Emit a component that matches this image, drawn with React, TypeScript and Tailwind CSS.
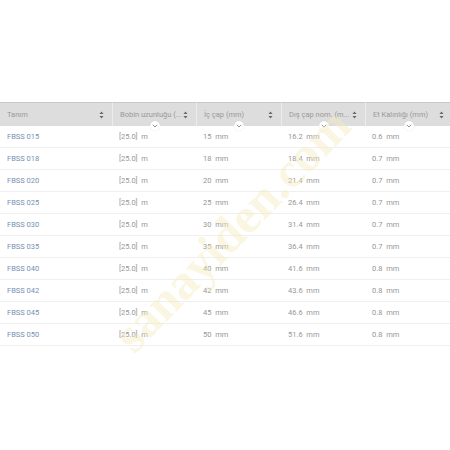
import React from "react";

const rows = [
  ["FBSS 015", "15", "16.2", "0.6"],
  ["FBSS 018", "18", "18.4", "0.7"],
  ["FBSS 020", "20", "21.4", "0.7"],
  ["FBSS 025", "25", "26.4", "0.7"],
  ["FBSS 030", "30", "31.4", "0.7"],
  ["FBSS 035", "35", "36.4", "0.7"],
  ["FBSS 040", "40", "41.6", "0.8"],
  ["FBSS 042", "42", "43.6", "0.8"],
  ["FBSS 045", "45", "46.6", "0.8"],
  ["FBSS 050", "50", "51.6", "0.8"],
];

const headers = ["Tanım", "Bobin uzunluğu (...", "İç çap (mm)", "Dış çap nom. (m...", "Et Kalınlığı (mm)"];

function SortIcon() {
  return (
    <svg width="5" height="8" viewBox="0 0 5 8" className="shrink-0">
      <path d="M2.5 0.5 L4.5 3 L0.5 3 Z" fill="#666" />
      <path d="M2.5 7.5 L4.5 5 L0.5 5 Z" fill="#666" />
    </svg>
  );
}

function Chevron() {
  return (
    <div className="absolute left-1/2 -bottom-[5px] -translate-x-1/2 w-[10px] h-[10px] rounded-full bg-white flex items-center justify-center shadow-[0_0_1px_rgba(0,0,0,0.15)]">
      <svg width="6" height="4" viewBox="0 0 6 4">
        <path d="M0.8 0.8 L3 3 L5.2 0.8" stroke="#888" strokeWidth="0.9" fill="none" />
      </svg>
    </div>
  );
}

export default function App() {
  return (
    <div className="relative w-[450px] h-[450px] overflow-hidden bg-white pt-[102px] font-['Roboto','Liberation_Sans',sans-serif] text-[7.5px]">
      <div className="grid grid-cols-[112px_84px_85px_84px_87px] w-[452px]">
        {headers.map((h, i) => (
          <div
            key={h}
            className={`relative h-[24px] flex items-center justify-between pl-[7px] pr-[8px] bg-[#dddddd] border-t border-[#c8c8c8] text-[#999999] ${i > 0 ? "border-l border-l-[#ececec]" : ""}`}
          >
            <span className="truncate">{h}</span>
            <SortIcon />
            {i > 0 && <Chevron />}
          </div>
        ))}
        {rows.map((r) => (
          <React.Fragment key={r[0]}>
            <div className="h-[22px] flex items-center pl-[7px] border-b border-[#efefef] text-[#7590b3]">{r[0]}</div>
            <div className="h-[22px] flex items-center pl-[7px] border-b border-[#efefef] text-[#969696] whitespace-pre">[25.0]  m</div>
            <div className="h-[22px] flex items-center pl-[7px] border-b border-[#efefef] text-[#969696] whitespace-pre">{r[1]}  mm</div>
            <div className="h-[22px] flex items-center pl-[7px] border-b border-[#efefef] text-[#969696] whitespace-pre">{r[2]}  mm</div>
            <div className="h-[22px] flex items-center pl-[7px] border-b border-[#efefef] text-[#969696] whitespace-pre">{r[3]}  mm</div>
          </React.Fragment>
        ))}
      </div>
      <div className="pointer-events-none absolute left-[232px] top-[230px] -translate-x-1/2 -translate-y-1/2 -rotate-[46deg] whitespace-nowrap font-['Liberation_Serif',serif] font-bold text-[50px] text-[#f4ecc0] opacity-45">
        sanayiden.com
      </div>
    </div>
  );
}
